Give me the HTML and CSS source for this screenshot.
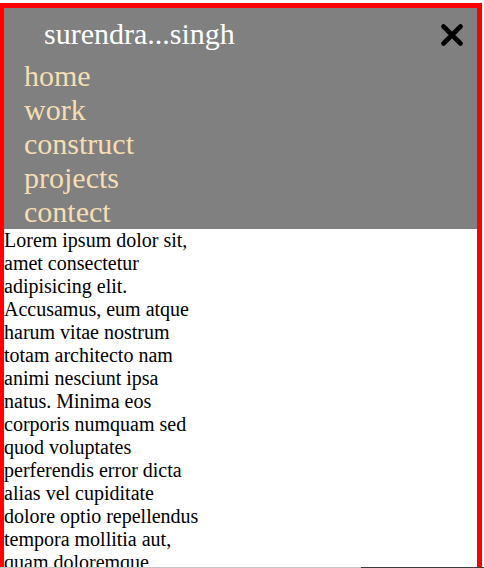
FILE: index.html
```html
<!DOCTYPE html>
<html>
<head>
<meta charset="utf-8">
<title>surendra...singh</title>
<link rel="stylesheet" href="styles.css">
</head>
<body>
<div class="frame">
  <header class="menu">
    <div class="top-row">
      <span class="brand">surendra...singh</span>
      <svg class="close" width="24" height="24" viewBox="0 0 24 24" aria-label="close">
        <path d="M3.5 3.5 L20.5 20.5 M20.5 3.5 L3.5 20.5" stroke="#000" stroke-width="4.6" stroke-linecap="round" fill="none"/>
      </svg>
    </div>
    <nav class="links">
      <a href="#">home</a>
      <a href="#">work</a>
      <a href="#">construct</a>
      <a href="#">projects</a>
      <a href="#">contect</a>
    </nav>
  </header>
  <p class="text">Lorem ipsum dolor sit, amet consectetur adipisicing elit. Accusamus, eum atque harum vitae nostrum totam architecto nam animi nesciunt ipsa natus. Minima eos corporis numquam sed quod voluptates perferendis error dicta alias vel cupiditate dolore optio repellendus tempora mollitia aut, quam doloremque laudantium eius dignissimos.</p>
</div>
<div class="scroll-edge"><span class="track"></span><span class="thumb"></span></div>
</body>
</html>
```
FILE: styles.css
```css
html {
  overflow: hidden;
}
body {
  margin: 3px 2px 0 -1px;
  font-family: "Liberation Serif", "Times New Roman", serif;
  background: #fff;
}
.frame {
  border: 5px solid #ff0000;
  min-height: 700px;
}
.menu {
  background: #808080;
  padding: 9px 13px 0 20px;
}
.top-row {
  display: flex;
  align-items: center;
  justify-content: space-between;
}
.brand {
  color: #ffffff;
  font-size: 30px;
  line-height: 34px;
  padding-left: 20px;
}
.close {
  display: block;
  margin-top: 2px;
}
.links {
  display: flex;
  flex-direction: column;
  margin-top: 8px;
}
.links a {
  color: #f5deb3;
  text-decoration: none;
  font-size: 30px;
  line-height: 34px;
}
.text {
  margin: 0;
  width: 200px;
  font-size: 20px;
  line-height: 23px;
  color: #000;
}
.scroll-edge {
  position: fixed;
  left: 0;
  right: 0;
  bottom: 0;
  height: 1px;
  display: flex;
}
.track {
  width: 361px;
  background: #c4c4c4;
}
.thumb {
  flex: 1;
  background: #3c3c3c;
}
```
